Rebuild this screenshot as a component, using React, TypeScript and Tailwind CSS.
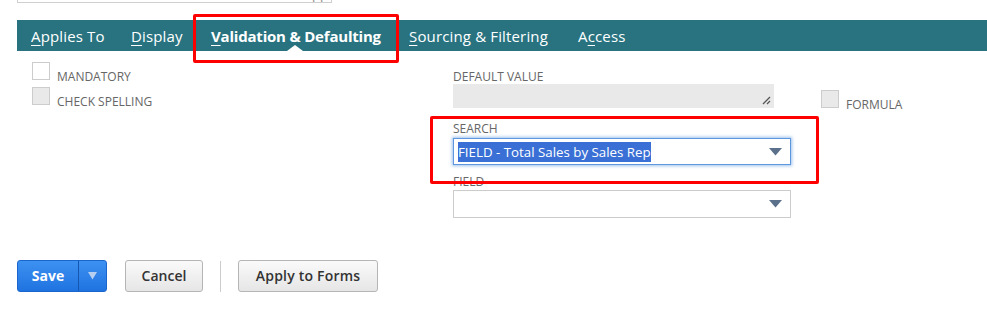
import React from "react";

function Checkbox({ filled = false }: { filled?: boolean }) {
  return (
    <div
      className={`w-[18px] h-[18px] shrink-0 border border-[#cccccc] ${filled ? "bg-[#e9e9e9]" : "bg-white"}`}
    />
  );
}

function Label({ children, className = "" }: { children: React.ReactNode; className?: string }) {
  return (
    <div className={`relative text-[12px] leading-[16px] text-[#666666] uppercase ${className}`}>{children}</div>
  );
}

function Arrow() {
  return (
    <svg width="13" height="8" viewBox="0 0 13 8" className="shrink-0">
      <path d="M0 0 H13 L6.5 7.5 Z" fill="#5b708a" />
    </svg>
  );
}

function Tab({ first, rest, width, active = false }: { first: string; rest: string; width?: string; active?: boolean }) {
  return (
    <div className={`${width ?? ""} shrink-0 whitespace-nowrap ${active ? "font-bold tracking-[-0.2px]" : "tracking-[0.15px]"}`}>
      <span className="underline underline-offset-[3px] decoration-1">{first}</span>
      {rest}
    </div>
  );
}

export default function App() {
  return (
    <div className="relative w-[987px] h-[324px] bg-white overflow-hidden font-['Open_Sans',sans-serif]">
      {/* top input stub */}
      <div className="relative ml-[17px] w-[315px] h-[3px] border-x border-b border-[#cfcfcf] overflow-hidden">
        <span className="absolute right-[3px] top-[-11px] text-[13px] leading-[13px] text-[#888]">pp</span>
      </div>

      {/* tab bar */}
      <div className="relative mt-[17px] ml-[17px] h-[31px] bg-[#28737f] flex items-center pt-[1px] pl-[14px] text-white text-[15px] leading-[20px]">
        <Tab first="A" rest="pplies To" width="w-[100px]" />
        <Tab first="D" rest="isplay" width="w-[80px]" />
        <Tab first="V" rest="alidation & Defaulting" width="w-[198px]" active />
        <Tab first="S" rest="ourcing & Filtering" width="w-[169px]" />
        <div className="shrink-0 whitespace-nowrap tracking-[0.15px]">
          A<span className="underline underline-offset-[3px] decoration-1">c</span>cess
        </div>
        <div className="absolute left-[270px] bottom-0 w-0 h-0 border-l-[8px] border-r-[8px] border-b-[6px] border-l-transparent border-r-transparent border-b-white" />
      </div>

      {/* content */}
      <div className="flex">
        {/* left column */}
        <div className="ml-[32px] w-[421px] pt-[11px] flex flex-col gap-[7px]">
          <div className="flex items-start h-[18px]">
            <Checkbox />
            <Label className="ml-[7px] mt-[5px] top-[2px]">Mandatory</Label>
          </div>
          <div className="flex items-start h-[18px]">
            <Checkbox filled />
            <Label className="ml-[7px] mt-[5px] top-[2px]">Check Spelling</Label>
          </div>
        </div>

        {/* right column */}
        <div className="pt-[17px] flex flex-col">
          <Label className="top-[1px]">Default Value</Label>
          <div className="flex items-start h-[24px]">
            <div className="relative w-[321px] h-[24px] bg-[#e9e9e9] shrink-0">
              <svg width="9" height="9" viewBox="0 0 9 9" className="absolute right-[3px] bottom-[3px]">
                <path d="M8 1 L1 8 M8 5 L5 8" stroke="#555" strokeWidth="1.3" />
              </svg>
            </div>
            <div className="ml-[47px] mt-[6px]">
              <Checkbox filled />
            </div>
            <Label className="ml-[7px] mt-[11px] top-[2px]">Formula</Label>
          </div>

          <Label className="mt-[12px] top-[1px]">Search</Label>
          <div className="mt-[2px] w-[338px] h-[27px] border border-[#5e97de] shadow-[0_0_3px_1px_rgba(94,151,222,0.6)] bg-white flex items-center pl-[4px] pr-[8px]">
            <span className="inline-block bg-[#3a6fd5] text-white text-[13.3px] leading-[20px] whitespace-nowrap">
              FIELD - Total Sales by Sales Rep
            </span>
            <div className="flex-1" />
            <Arrow />
          </div>

          <Label className="mt-[8px] top-[1px]">Field</Label>
          <div className="mt-[1px] w-[338px] h-[28px] border border-[#cccccc] bg-white flex items-center justify-end pr-[8px]">
            <Arrow />
          </div>
        </div>
      </div>

      {/* buttons */}
      <div className="mt-[41px] ml-[17px] flex items-center">
        <div className="flex h-[32px] w-[90px] rounded-[3px] border border-[#1b66cc] bg-gradient-to-b from-[#3d91f1] to-[#1f73e0] overflow-hidden">
          <div className="w-[61px] flex items-center justify-center text-white font-bold text-[14px] border-r border-[#1556b0]">
            Save
          </div>
          <div className="flex-1 flex items-center justify-center">
            <svg width="9" height="8" viewBox="0 0 9 8">
              <path d="M0 0 H9 L4.5 7.5 Z" fill="#b6cff0" />
            </svg>
          </div>
        </div>
        <div className="ml-[18px] h-[32px] w-[78px] rounded-[3px] border border-[#b5b5b5] bg-gradient-to-b from-[#fafafa] to-[#e6e6e6] flex items-center justify-center text-[14px] font-semibold text-[#333]">
          Cancel
        </div>
        <div className="ml-[17px] w-px h-[31px] bg-[#cccccc] mt-[2px]" />
        <div className="ml-[17px] h-[32px] w-[140px] rounded-[3px] border border-[#b5b5b5] bg-gradient-to-b from-[#fafafa] to-[#e6e6e6] flex items-center justify-center text-[14px] font-semibold text-[#333] tracking-[0.2px]">
          Apply to Forms
        </div>
      </div>

      {/* annotation boxes */}
      <div className="absolute left-[193px] top-[14px] w-[206px] h-[49px] border-[3px] border-[#ff0000] rounded-[2px] pointer-events-none" />
      <div className="absolute left-[430px] top-[116px] w-[389px] h-[68px] border-[3px] border-[#ff0000] rounded-[2px] pointer-events-none" />
    </div>
  );
}
